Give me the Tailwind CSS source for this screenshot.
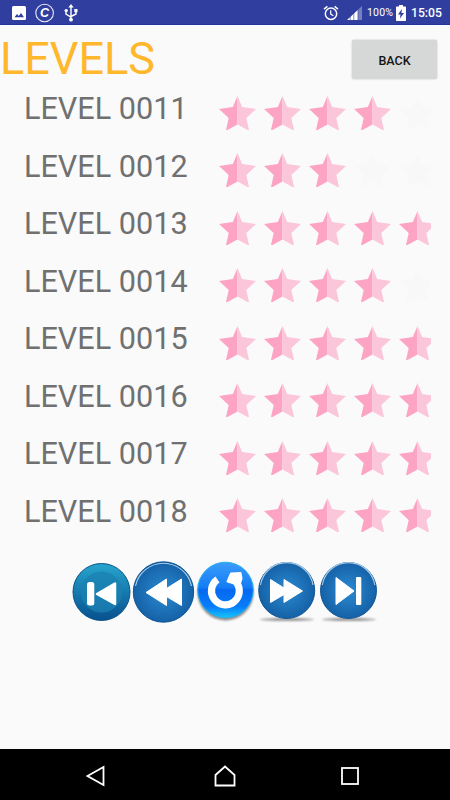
<!DOCTYPE html>
<html lang="en">
<head>
    <meta charset="UTF-8">
    <meta name="viewport" content="width=device-width, initial-scale=1.0">
    <title>Levels</title>
    <script src="https://cdn.jsdelivr.net/npm/@tailwindcss/browser@4"></script>
    <style>
        body {
            font-family: Roboto, 'Liberation Sans', sans-serif;
        }
    </style>
</head>
<body class="bg-[#fafafa]">

    <div class="h-screen flex flex-col overflow-hidden">
        <!-- Status bar -->
        <div class="h-[25px] shrink-0 bg-[#303f9f] border-b border-[#2035a0] flex items-center text-white">
            <svg class="ml-3 mt-[2px]" width="14" height="14" viewBox="0 0 14 14">
                <rect width="14" height="14" rx="1.5" fill="#fff"/>
                <path d="M2.5 11.3 5 8l1.8 2L9 7l3 4.3z" fill="#303f9f"/>
            </svg>
            <svg class="ml-[9px] mt-[2px]" width="20" height="20" viewBox="0 0 20 20">
                <circle cx="9.6" cy="10" r="8.8" fill="none" stroke="#e6e8f5" stroke-width="1.1"/>
                <text x="5" y="14.3" font-family="Liberation Sans, sans-serif" font-size="12.5" font-style="italic" font-weight="bold" fill="#fff">C</text>
            </svg>
            <svg class="ml-[9px] mt-[2px]" width="14" height="18" viewBox="0 0 14 18" fill="none" stroke="#fff" stroke-width="1.4">
                <path d="M7 2v14M2 7v3.2l5 3M12 7v3L7 12.5"/>
                <path d="M7 0 9.7 3.6H4.3zM10.3 5h3.2v3.2h-3.2z" fill="#fff" stroke="none"/>
                <circle cx="2.2" cy="6.6" r="1.7" fill="#fff" stroke="none"/>
                <circle cx="7" cy="15.7" r="1.9" fill="#fff" stroke="none"/>
            </svg>
            <svg class="ml-auto mr-px mt-[2px]" width="16" height="16" viewBox="0 0 16 16" fill="none" stroke="#fff" stroke-width="1.5">
                <circle cx="8" cy="8.7" r="5.7"/>
                <path d="M1 4.2 4.4 1.4M15 4.2l-3.4-2.8"/>
                <path d="M7.7 5.3v3.8l2.7 1.7" stroke-width="1.2"/>
            </svg>
            <svg class="ml-[7px] mt-[2px]" width="15" height="14" viewBox="0 0 15 14">
                <path d="M15 0v14H11V3.7z" fill="#7580c0"/>
                <path d="M11 3.7V14H0z" fill="#fff"/>
                <path d="M3.2 9v5M6.8 6v8M10.9 3v11" stroke="#303f9f" stroke-width=".6"/>
            </svg>
            <span class="ml-[5px] mt-[3px] w-[27px] text-[10.5px] leading-none whitespace-nowrap tracking-[.2px]">100%</span>
            <svg class="ml-[2px] mt-[2px]" width="10" height="16" viewBox="0 0 10 16">
                <path d="M3 0h4v1.5h2.3q.7 0 .7.7v13.1q0 .7-.7.7H.7q-.7 0-.7-.7V2.2q0-.7.7-.7H3z" fill="#fff"/>
                <path d="M5.8 4 2 9.5h2.5L4 13.5 8 8H5.5z" fill="#303f9f"/>
            </svg>
            <span class="ml-[5px] mr-[9px] mt-[3px] w-[30px] text-[12.2px] leading-none font-medium whitespace-nowrap">15:05</span>
        </div>

        <!-- Title and back button -->
        <div class="h-[55px] shrink-0 flex items-start justify-between">
            <h1 class="mt-[7px] text-[45px] leading-[54px] text-[#ffb72b]">LEVELS</h1>
            <button class="mt-[15px] mr-[13px] w-[85px] h-[39px] pt-[3px] rounded-xs bg-[#d6d8d7] text-[12.5px] font-medium text-[#141414] shadow-[0_0_2px_rgba(0,0,0,0.25)]">BACK</button>
        </div>

        <!-- Rows are injected here -->
        <div id="levels" class="shrink-0"></div>

        <!-- Paging controls -->
        <div class="mt-5 h-[66px] shrink-0 flex pl-[71px]">
            <svg width="309" height="66" viewBox="71 560 309 66">
                <defs>
                    <linearGradient id="teal" x1="0" y1="0" x2="0" y2="1">
                        <stop offset="0" stop-color="#27a5cd"/>
                        <stop offset="1" stop-color="#07508f"/>
                    </linearGradient>
                    <linearGradient id="tealInner" x1="0" y1="0" x2="0" y2="1">
                        <stop offset="0" stop-color="#1c87b6"/>
                        <stop offset="1" stop-color="#1878ad"/>
                    </linearGradient>
                    <radialGradient id="blue">
                        <stop offset="0" stop-color="#2b8bd3"/>
                        <stop offset="1" stop-color="#1561a6"/>
                    </radialGradient>
                    <linearGradient id="bright" x1="0" y1="0" x2="0" y2="1">
                        <stop offset="0" stop-color="#3c9cfb"/>
                        <stop offset=".45" stop-color="#147df6"/>
                        <stop offset=".5" stop-color="#0569f2"/>
                        <stop offset=".8" stop-color="#087df8"/>
                        <stop offset="1" stop-color="#16c5fc"/>
                    </linearGradient>
                    <filter id="soft" x="-20%" y="-100%" width="140%" height="300%">
                        <feGaussianBlur stdDeviation="1"/>
                    </filter>
                </defs>

                <!-- first -->
                <circle cx="101.5" cy="592" r="28.5" fill="url(#teal)" stroke="#0b5488" stroke-width="1"/>
                <circle cx="101.5" cy="592" r="20.5" fill="url(#tealInner)"/>
                <rect x="87" y="582" width="7.3" height="23.5" rx="2.5" fill="#fff"/>
                <path d="M97 594 115 583.5v20.5z" fill="#fff" stroke="#fff" stroke-width="2.5" stroke-linejoin="round"/>

                <!-- rewind -->
                <circle cx="163.5" cy="592" r="30.2" fill="url(#blue)" stroke="#0e5594" stroke-width="1"/>
                <path d="M135.500 586A28.600 28.600 0 0 1 191.500 586" fill="none" stroke="#a6cbe8" stroke-width="1.2"/>
                <path d="M146 592.500 166.500 579v9.500L181.500 579v26.500L166.500 596.500v9z" fill="#fff" stroke="#fff" stroke-linejoin="round"/>

                <!-- reload -->
                <circle cx="225.5" cy="592.5" r="28" fill="#444" opacity=".6" filter="url(#soft)"/>
                <circle cx="225.5" cy="590" r="27.8" fill="url(#bright)" stroke="#28b2ee" stroke-width="1"/>
                <path d="M217.500 579.500A13.900 13.900 0 1 0 236 582" fill="none" stroke="#fff" stroke-width="7.2"/>
                <path d="M227.500 581.500 231 573.500 240.500 573 241.500 578.500 239.500 585z" fill="#fff" stroke="#fff" stroke-width="2" stroke-linejoin="round"/>

                <!-- fast forward -->
                <ellipse cx="287" cy="619.5" rx="27" ry="1.5" fill="#999" filter="url(#soft)"/>
                <circle cx="286.7" cy="590.5" r="28" fill="url(#blue)" stroke="#0e5594" stroke-width="1"/>
                <path d="M260.500 585A26.600 26.600 0 0 1 313 585" fill="none" stroke="#a6cbe8" stroke-width="1.2"/>
                <path d="M270.500 579.500 284 588v-8.500L302.500 591 284 602.500V594.500L270.500 602.500z" fill="#fff" stroke="#fff" stroke-linejoin="round"/>

                <!-- last -->
                <ellipse cx="349" cy="619.5" rx="27" ry="1.5" fill="#999" filter="url(#soft)"/>
                <circle cx="348.5" cy="590.5" r="28" fill="url(#blue)" stroke="#0e5594" stroke-width="1"/>
                <path d="M322.300 585A26.600 26.600 0 0 1 374.800 585" fill="none" stroke="#a6cbe8" stroke-width="1.2"/>
                <path d="M336 577.500 354 591 336 604.500z" fill="#fff" stroke="#fff" stroke-linejoin="round"/>
                <rect x="356" y="577" width="5.3" height="28" rx="1" fill="#fff"/>
            </svg>
        </div>

        <!-- Navigation bar -->
        <div class="mt-auto h-[51px] shrink-0 bg-black flex items-center justify-between pl-[86px] pr-[90px]">
            <svg class="mt-[3px]" width="19" height="22" viewBox="0 0 19 22" fill="none" stroke="#fff" stroke-width="1.8">
                <path d="M1.5 11 17.5 2v18z"/>
            </svg>
            <svg class="ml-[4px] mt-[2px]" width="22" height="22" viewBox="0 0 22 22" fill="none" stroke="#fff" stroke-width="1.8">
                <path d="M1.5 10 11 1.5l9.5 8.5v10.500h-19z"/>
            </svg>
            <svg class="mt-[3px]" width="20" height="20" viewBox="0 0 20 20" fill="none" stroke="#fff" stroke-width="1.8">
                <rect x="2" y="2" width="16" height="16"/>
            </svg>
        </div>
    </div>

    <script>
        const levels = [
            { name: "LEVEL 0011", stars: 4 },
            { name: "LEVEL 0012", stars: 3 },
            { name: "LEVEL 0013", stars: 5 },
            { name: "LEVEL 0014", stars: 4 },
            { name: "LEVEL 0015", stars: 5 },
            { name: "LEVEL 0016", stars: 5 },
            { name: "LEVEL 0017", stars: 5 },
            { name: "LEVEL 0018", stars: 5 }
        ];

        function star(index, filled) {
            const left = filled ? '#fda4c4' : '#f8f8f8';
            const right = filled ? '#fbc6da' : '#f8f8f8';
            return `<g transform="translate(${index * 45} 0)">
                <path d="M18.5 0 13.8 11 0 13l9.7 9L7 34h1.5l10-5.5z" fill="${left}"/>
                <path d="M18.5 0 23.2 11 37 13l-9.7 9L30 34h-1.5l-10-5.5z" fill="${right}"/>
            </g>`;
        }

        const list = document.getElementById('levels');
        levels.forEach((level) => {
            const row = document.createElement('div');
            row.className = 'h-[57.5px] flex items-start';
            let stars = '';
            for (let i = 0; i < 5; i++) stars += star(i, i < level.stars);
            row.innerHTML = `
                <span class="w-[195px] ml-6 text-[30.6px] leading-[57px] text-[#707070] whitespace-nowrap">${level.name}</span>
                <svg class="mt-[15.6px]" width="212" height="34" viewBox="0 0 212 34">${stars}</svg>`;
            list.appendChild(row);
        });
    </script>
</body>
</html>
